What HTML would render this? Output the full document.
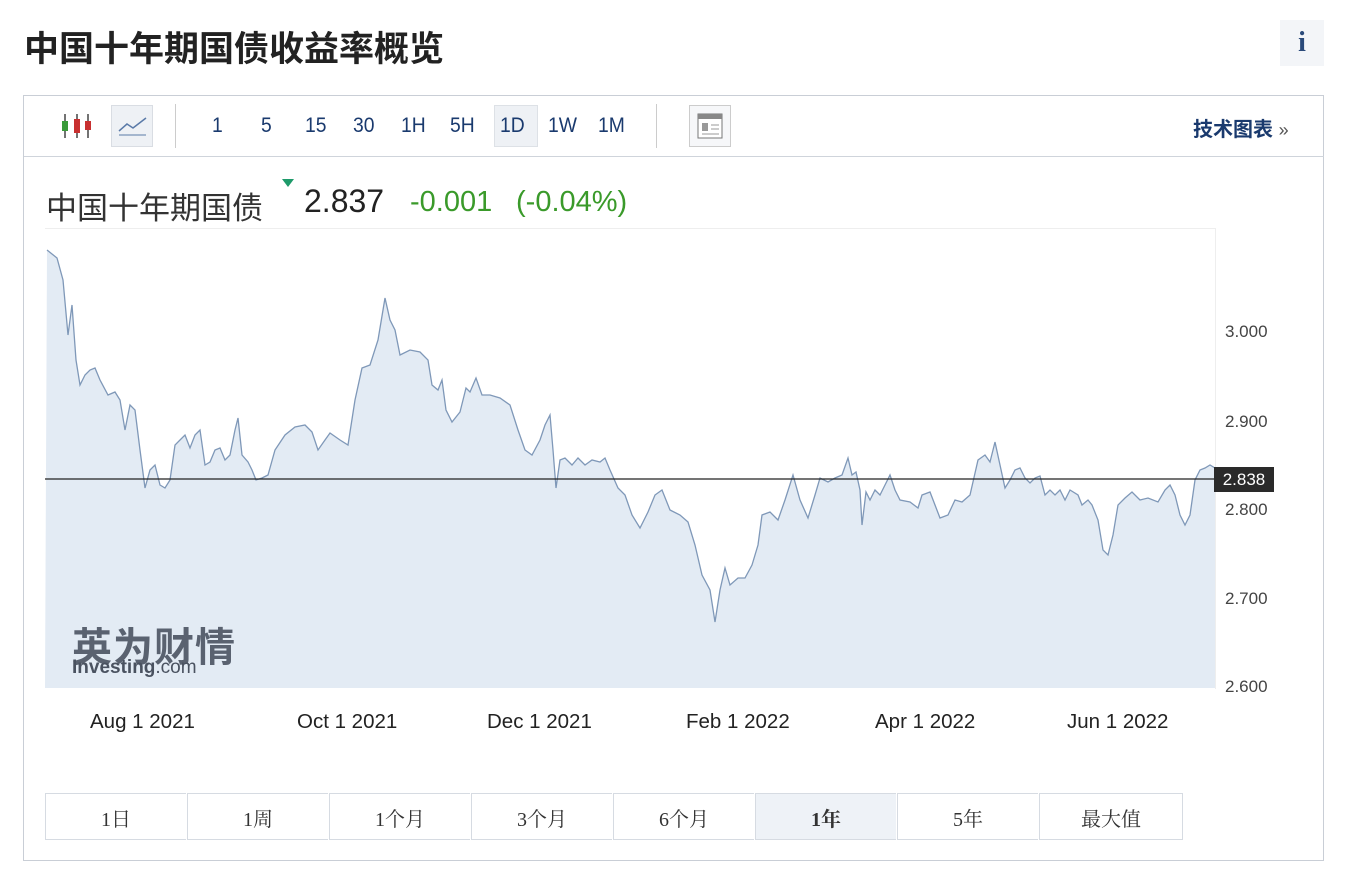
<!DOCTYPE html><html><head><meta charset="utf-8"><style>
body{margin:0;width:1350px;height:884px;background:#fff;font-family:"Liberation Sans","Noto Sans CJK SC",sans-serif;position:relative;overflow:hidden}
.a{position:absolute}
.tb{font-size:21px;color:#1a3a6e;top:114px;transform:scaleX(0.92);transform-origin:left}
.btn{position:absolute;top:793px;height:47px;width:141px;border:1px solid #d6dbe2;border-right:none;text-align:center;line-height:52px;font-size:20px;color:#333;font-family:"Liberation Serif","Noto Serif CJK SC",serif;box-sizing:border-box}
.yl{position:absolute;left:1225px;font-size:17px;color:#444}
.xl{position:absolute;top:710px;font-size:20.5px;color:#222}
</style></head><body>
<div class="a" style="left:24px;top:21px;font-size:35px;font-weight:bold;color:#222">中国十年期国债收益率概览</div>
<div class="a" style="left:1280px;top:20px;width:44px;height:46px;background:#f3f5f8;text-align:center;font:bold 28px 'Liberation Serif',serif;color:#2a4a7a;line-height:46px">i</div>
<div class="a" style="left:23px;top:95px;width:1301px;height:766px;border:1px solid #c9ced6;box-sizing:border-box"></div>
<div class="a" style="left:24px;top:156px;width:1300px;height:1px;background:#cfd4db"></div>
<svg class="a" style="left:60px;top:112px" width="34" height="28"><g stroke="#444" stroke-width="1.5"><line x1="5" y1="2" x2="5" y2="26"/><line x1="17" y1="2" x2="17" y2="26"/><line x1="28" y1="2" x2="28" y2="26"/></g><rect x="2" y="9" width="6" height="10" fill="#3a9a3a"/><rect x="14" y="7" width="6" height="14" fill="#c83030"/><rect x="25" y="9" width="6" height="9" fill="#c83030"/></svg>
<div class="a" style="left:111px;top:105px;width:42px;height:42px;background:#eef1f5;border:1px solid #d9dde3;box-sizing:border-box"></div>
<svg class="a" style="left:116px;top:113px" width="34" height="26"><polyline points="3,18 11,11 17,15 30,5" fill="none" stroke="#5a7aa8" stroke-width="1.5"/><line x1="3" y1="22" x2="30" y2="22" stroke="#5a7aa8"/></svg>
<div class="a" style="left:175px;top:104px;width:1px;height:44px;background:#ccc"></div>
<div class="a" style="left:494px;top:105px;width:44px;height:42px;background:#eef1f5;border:1px solid #dde1e6;box-sizing:border-box"></div>
<div class="a tb" style="left:212px">1</div><div class="a tb" style="left:261px">5</div><div class="a tb" style="left:305px">15</div><div class="a tb" style="left:353px">30</div><div class="a tb" style="left:401px">1H</div><div class="a tb" style="left:450px">5H</div><div class="a tb" style="left:500px">1D</div><div class="a tb" style="left:548px">1W</div><div class="a tb" style="left:598px">1M</div>
<div class="a" style="left:656px;top:104px;width:1px;height:44px;background:#ccc"></div>
<div class="a" style="left:689px;top:105px;width:42px;height:42px;border:1px solid #ccc;background:#f6f7f9;box-sizing:border-box"></div>
<svg class="a" style="left:697px;top:113px" width="26" height="26"><rect x="1" y="1" width="24" height="24" fill="#fff" stroke="#777"/><rect x="1" y="1" width="24" height="5" fill="#888"/><rect x="5" y="10" width="6" height="8" fill="#999"/><line x1="14" y1="12" x2="22" y2="12" stroke="#999"/><line x1="14" y1="16" x2="22" y2="16" stroke="#999"/><line x1="5" y1="21" x2="22" y2="21" stroke="#999"/></svg>
<div class="a" style="left:1193px;top:113px;font-size:20px;font-weight:bold;color:#1a3a6e">技术图表 <span style="font-weight:normal;font-size:18px;color:#555">»</span></div>
<div class="a" style="left:46px;top:183px;font-size:31px;color:#333">中国十年期国债</div>
<svg class="a" style="left:280px;top:177px" width="16" height="12"><path d="M2 2h12l-6 8z" fill="#1e9a6a"/></svg>
<div class="a" style="left:304px;top:183px;font-size:32px;color:#222">2.837</div>
<div class="a" style="left:410px;top:186px;font-size:29px;color:#3a9a2a">-0.001</div>
<div class="a" style="left:516px;top:186px;font-size:29px;color:#3a9a2a">(-0.04%)</div>
<div class="a" style="left:45px;top:228px;width:1170px;height:460px;background:#fff;border-top:1px solid #eee;border-right:1px solid #eee"></div>
<svg class="a" style="left:0;top:0" width="1350" height="884">
<polygon fill="#e3ebf4" points="45,688 47,250 57,258 63,280 68,335 72,305 76,360 80,385 85,375 90,370 95,368 100,380 108,395 115,392 120,400 125,430 130,405 135,410 140,450 145,488 150,470 155,465 160,485 165,488 170,480 175,445 180,440 185,435 190,448 195,435 200,430 205,465 210,462 215,450 220,448 225,460 230,455 235,430 238,418 242,455 248,462 252,470 256,480 262,478 268,475 275,450 285,435 295,427 305,425 312,432 318,450 325,440 330,433 340,440 348,445 355,400 362,368 370,365 378,340 385,298 390,320 395,330 400,355 410,350 420,352 428,360 432,385 438,390 442,380 446,410 452,422 460,412 466,388 470,392 476,378 482,395 490,395 500,398 510,405 518,430 525,450 532,455 540,440 545,425 550,415 553,450 556,488 560,460 565,458 572,465 578,458 585,465 592,460 600,462 605,458 610,470 618,488 625,495 632,515 640,528 648,512 655,495 662,490 670,510 680,515 688,522 695,545 702,575 710,590 715,622 720,590 725,568 730,585 738,578 745,578 752,565 758,545 762,515 770,512 778,520 785,500 793,475 800,500 808,518 815,495 820,478 828,482 835,478 842,475 848,458 852,475 856,472 860,490 862,525 866,492 870,500 875,490 880,495 885,485 890,475 895,490 900,500 910,502 918,508 922,495 930,492 935,505 940,518 948,515 955,500 962,502 970,495 978,460 985,455 990,462 995,442 1000,465 1005,488 1010,480 1015,470 1020,468 1025,478 1030,483 1035,478 1040,476 1045,495 1050,490 1055,495 1060,490 1065,500 1070,490 1078,495 1082,505 1088,500 1092,505 1098,520 1103,550 1108,555 1113,535 1118,505 1125,498 1132,492 1140,500 1148,498 1158,502 1165,490 1170,485 1175,495 1180,515 1185,525 1190,515 1195,480 1200,470 1205,468 1210,465 1215,468 1215,688"/>
<polyline fill="none" stroke="#7f98b8" stroke-width="1.3" points="47,250 57,258 63,280 68,335 72,305 76,360 80,385 85,375 90,370 95,368 100,380 108,395 115,392 120,400 125,430 130,405 135,410 140,450 145,488 150,470 155,465 160,485 165,488 170,480 175,445 180,440 185,435 190,448 195,435 200,430 205,465 210,462 215,450 220,448 225,460 230,455 235,430 238,418 242,455 248,462 252,470 256,480 262,478 268,475 275,450 285,435 295,427 305,425 312,432 318,450 325,440 330,433 340,440 348,445 355,400 362,368 370,365 378,340 385,298 390,320 395,330 400,355 410,350 420,352 428,360 432,385 438,390 442,380 446,410 452,422 460,412 466,388 470,392 476,378 482,395 490,395 500,398 510,405 518,430 525,450 532,455 540,440 545,425 550,415 553,450 556,488 560,460 565,458 572,465 578,458 585,465 592,460 600,462 605,458 610,470 618,488 625,495 632,515 640,528 648,512 655,495 662,490 670,510 680,515 688,522 695,545 702,575 710,590 715,622 720,590 725,568 730,585 738,578 745,578 752,565 758,545 762,515 770,512 778,520 785,500 793,475 800,500 808,518 815,495 820,478 828,482 835,478 842,475 848,458 852,475 856,472 860,490 862,525 866,492 870,500 875,490 880,495 885,485 890,475 895,490 900,500 910,502 918,508 922,495 930,492 935,505 940,518 948,515 955,500 962,502 970,495 978,460 985,455 990,462 995,442 1000,465 1005,488 1010,480 1015,470 1020,468 1025,478 1030,483 1035,478 1040,476 1045,495 1050,490 1055,495 1060,490 1065,500 1070,490 1078,495 1082,505 1088,500 1092,505 1098,520 1103,550 1108,555 1113,535 1118,505 1125,498 1132,492 1140,500 1148,498 1158,502 1165,490 1170,485 1175,495 1180,515 1185,525 1190,515 1195,480 1200,470 1205,468 1210,465 1215,468"/>
<line x1="45" y1="479" x2="1215" y2="479" stroke="#222" stroke-width="1.3"/>
</svg>
<div class="a" style="left:1214px;top:467px;width:60px;height:25px;background:#2a2a2a;color:#fff;font-size:17px;line-height:25px;text-align:center">2.838</div>
<div class="yl" style="top:322px">3.000</div><div class="yl" style="top:412px">2.900</div><div class="yl" style="top:500px">2.800</div><div class="yl" style="top:589px">2.700</div><div class="yl" style="top:677px">2.600</div>
<div class="a" style="left:72px;top:615px;font-size:40px;font-weight:bold;color:#5a6270;letter-spacing:1px">英为财情</div>
<div class="a" style="left:72px;top:657px;font-size:19px;font-weight:bold;color:#4a5260">Investing<span style="font-weight:normal">.com</span></div>
<div class="xl" style="left:90px">Aug 1 2021</div><div class="xl" style="left:297px">Oct 1 2021</div><div class="xl" style="left:487px">Dec 1 2021</div><div class="xl" style="left:686px">Feb 1 2022</div><div class="xl" style="left:875px">Apr 1 2022</div><div class="xl" style="left:1067px">Jun 1 2022</div>
<div class="btn" style="left:45px">1日</div><div class="btn" style="left:187px">1周</div><div class="btn" style="left:329px">1个月</div><div class="btn" style="left:471px">3个月</div><div class="btn" style="left:613px">6个月</div><div class="btn" style="left:755px;background:#eef2f7;font-weight:bold">1年</div><div class="btn" style="left:897px">5年</div><div class="btn" style="left:1039px;width:144px;border-right:1px solid #d6dbe2">最大值</div>
</body></html>
